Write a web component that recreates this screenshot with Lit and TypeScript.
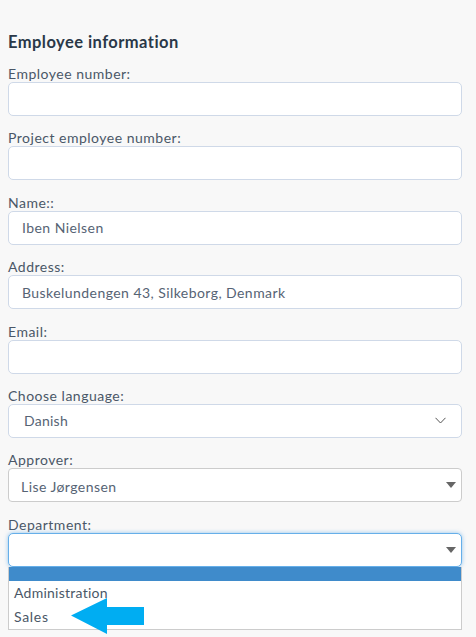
import { LitElement, html, css } from "lit";
import { customElement } from "lit/decorators.js";

const FIELDS = [
  { label: "Employee number:", value: "" },
  { label: "Project employee number:", value: "" },
  { label: "Name::", value: "Iben Nielsen" },
  { label: "Address:", value: "Buskelundengen 43, Silkeborg, Denmark" },
  { label: "Email:", value: "" },
];

@customElement("app-root")
export class AppRoot extends LitElement {
  static styles = css`
    :host {
      display: block;
      width: 476px;
      height: 637px;
      overflow: hidden;
      background: #f8f8f8;
      font-family: "Lato", "Open Sans", sans-serif;
      color: #3a4a5c;
      position: relative;
    }
    .form {
      display: flex;
      flex-direction: column;
      padding: 32px 14px 0 8px;
    }
    h2 {
      margin: 0 0 12px;
      font-size: 16.5px;
      line-height: 21px;
      font-weight: 700;
      color: #2a3848;
      letter-spacing: 0.45px;
    }
    .field {
      display: flex;
      flex-direction: column;
      height: 64.4px;
      flex: none;
    }
    label {
      font-size: 14px;
      line-height: 18px;
      height: 18px;
      font-weight: 400;
      color: #4a5767;
      margin-bottom: -1px;
      letter-spacing: 0.5px;
    }
    .box {
      box-sizing: border-box;
      height: 34px;
      flex: none;
      display: flex;
      align-items: center;
      justify-content: space-between;
      background: #fff;
      border: 1px solid #cfd9e8;
      border-radius: 5px;
      padding: 0 13px;
      font-size: 14px;
      color: #566374;
      letter-spacing: 0.44px;
    }
    .box.language { padding: 0 15px; letter-spacing: 0.25px; }
    .box.plain { border-color: #cccccc; padding: 0 12px; border-radius: 4px; }
    .box.plain span { padding-top: 3px; }
    .box.plain svg { margin-right: -7px; }
    .box.focus {
      border-color: #66afe9;
      box-shadow: 0 0 4px rgba(102, 175, 233, 0.7);
      padding: 0 12px;
    }
    .box.focus svg { margin-right: -7px; }
    .dropdown {
      box-sizing: border-box;
      position: absolute;
      left: 8px;
      top: 567px;
      width: 454px;
      height: 63px;
      background: #fff;
      border: 1px solid #cccccc;
      border-top: none;
      font-size: 14px;
      color: #4a5767;
    }
    .blank { height: 14px; background: #3f8bcb; }
    .opt { height: 24px; line-height: 24px; padding-left: 5px; letter-spacing: 0.25px; }
    .opt.sales { letter-spacing: 0.7px; }
    .arrow { position: absolute; left: 71px; top: 598px; }
  `;

  render() {
    return html`
      <div class="form">
        <h2>Employee information</h2>
        ${FIELDS.map(
          (f) => html`<div class="field">
            <label>${f.label}</label>
            <div class="box">${f.value}</div>
          </div>`
        )}
        <div class="field">
          <label>Choose language:</label>
          <div class="box language">
            <span>Danish</span>
            <svg width="11" height="7" viewBox="0 0 11 7" fill="none">
              <path d="M0.5 0.8 L5.5 6 L10.5 0.8" stroke="#555" stroke-width="1" />
            </svg>
          </div>
        </div>
        <div class="field">
          <label>Approver:</label>
          <div class="box plain">
            <span>Lise Jørgensen</span>
            <svg width="10" height="6" viewBox="0 0 10 6"><path d="M0 0 H10 L5 6 Z" fill="#666" /></svg>
          </div>
        </div>
        <div class="field">
          <label>Department:</label>
          <div class="box focus">
            <span></span>
            <svg width="10" height="6" viewBox="0 0 10 6"><path d="M0 0 H10 L5 6 Z" fill="#666" /></svg>
          </div>
        </div>
      </div>
      <div class="dropdown">
        <div class="blank"></div>
        <div class="opt">Administration</div>
        <div class="opt sales">Sales</div>
      </div>
      <svg class="arrow" width="73" height="36" viewBox="0 0 73 36">
        <path d="M0 17.5 L36 0 V9 H73 V27 H36 V36 Z" fill="#00adf2" />
      </svg>
    `;
  }
}
